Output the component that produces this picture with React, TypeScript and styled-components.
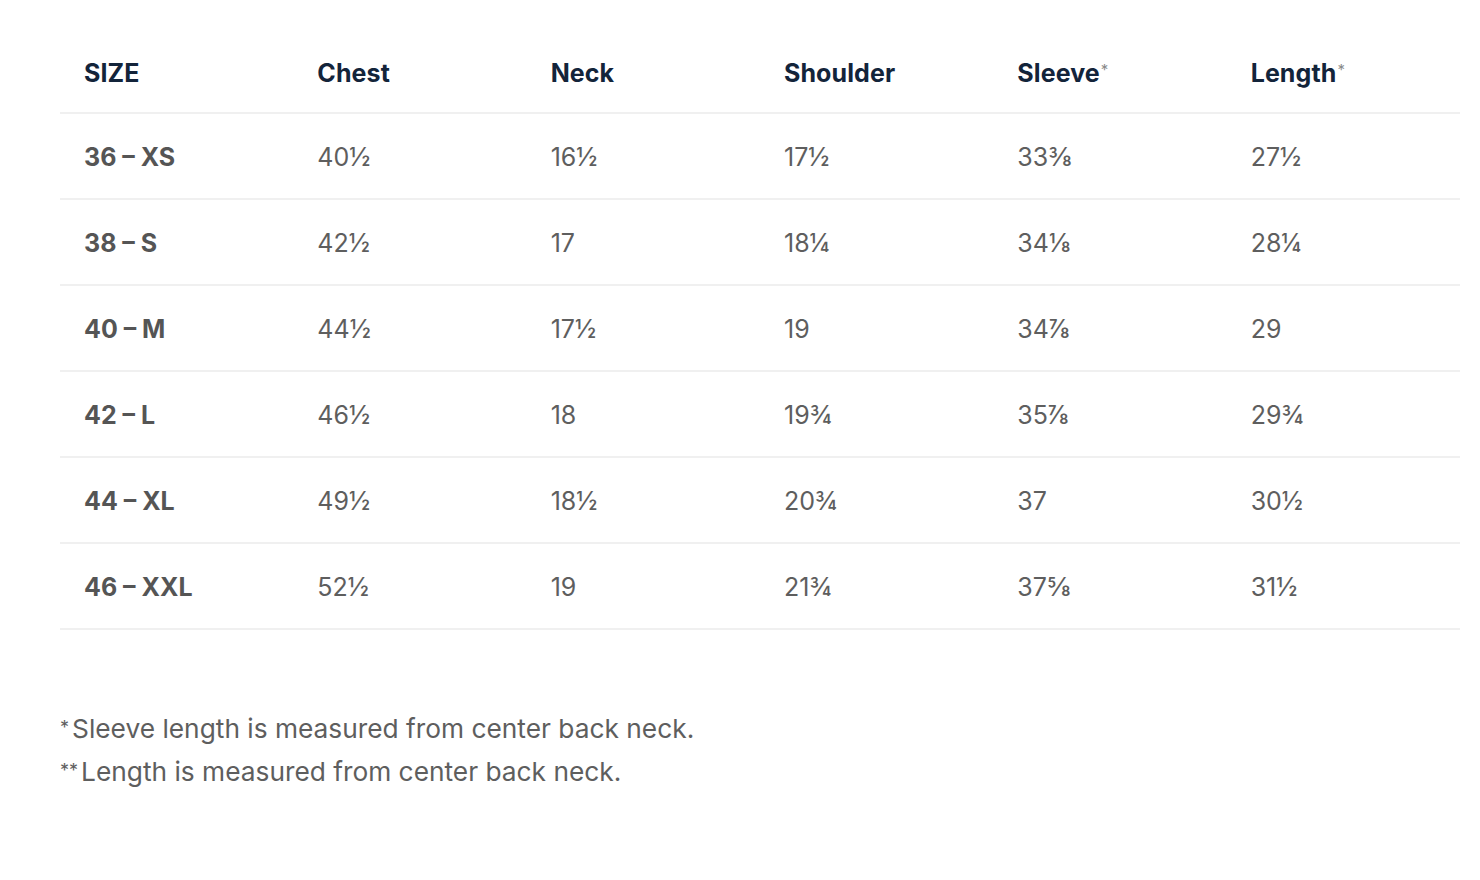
import React from 'react'
import styled, { createGlobalStyle } from 'styled-components'

const GlobalStyle = createGlobalStyle`
  body {
    margin: 0;
    background: #ffffff;
    font-family: Inter, 'Noto Sans', sans-serif;
  }
`

const Page = styled.div`
  padding: 32px 20px 0 60px;
`

const Table = styled.table`
  width: 1400px;
  border-collapse: collapse;
  table-layout: fixed;
`

const HeadCell = styled.th`
  height: 78px;
  padding: 2px 0 0 24px;
  text-align: left;
  vertical-align: middle;
  font-size: 25px;
  font-weight: 700;
  color: #13243a;
  border-bottom: 2px solid #f0f0f0;
  letter-spacing: 0.1px;
`

const Star = styled.span`
  font-size: 15px;
  font-weight: 400;
  color: #8a8a8a;
  vertical-align: 7px;
  margin-left: 1px;
`

const Row = styled.tr`
  height: 86px;
  border-bottom: 2px solid #f0f0f0;
`

const Cell = styled.td<{ $bold?: boolean }>`
  padding: 2px 0 0 24px;
  vertical-align: middle;
  font-size: 25px;
  font-weight: ${(p) => (p.$bold ? 700 : 400)};
  color: ${(p) => (p.$bold ? '#555555' : '#5e5e5e')};
`

const Notes = styled.div`
  margin-top: 77px;
  font-size: 26.3px;
  line-height: 42px;
  color: #5e5e5e;
`

const NoteMark = styled.span`
  font-size: 18px;
  vertical-align: 4px;
  margin-right: 3px;
`

const headers = [
  { label: 'SIZE' },
  { label: 'Chest' },
  { label: 'Neck' },
  { label: 'Shoulder' },
  { label: 'Sleeve', star: true },
  { label: 'Length', star: true },
]

const rows = [
  ['36 – XS', '40½', '16½', '17½', '33⅜', '27½'],
  ['38 – S', '42½', '17', '18¼', '34⅛', '28¼'],
  ['40 – M', '44½', '17½', '19', '34⅞', '29'],
  ['42 – L', '46½', '18', '19¾', '35⅞', '29¾'],
  ['44 – XL', '49½', '18½', '20¾', '37', '30½'],
  ['46 – XXL', '52½', '19', '21¾', '37⅝', '31½'],
]

const App = () => {
  return (
    <Page>
      <GlobalStyle />
      <Table>
        <thead>
          <tr>
            {headers.map((h) => (
              <HeadCell key={h.label}>
                {h.label}
                {h.star && <Star>*</Star>}
              </HeadCell>
            ))}
          </tr>
        </thead>
        <tbody>
          {rows.map((r) => (
            <Row key={r[0]}>
              {r.map((v, i) => (
                <Cell key={i} $bold={i === 0}>
                  {v}
                </Cell>
              ))}
            </Row>
          ))}
        </tbody>
      </Table>
      <Notes>
        <div>
          <NoteMark>*</NoteMark>Sleeve length is measured from center back neck.
        </div>
        <div>
          <NoteMark>**</NoteMark>Length is measured from center back neck.
        </div>
      </Notes>
    </Page>
  )
}

export default App
